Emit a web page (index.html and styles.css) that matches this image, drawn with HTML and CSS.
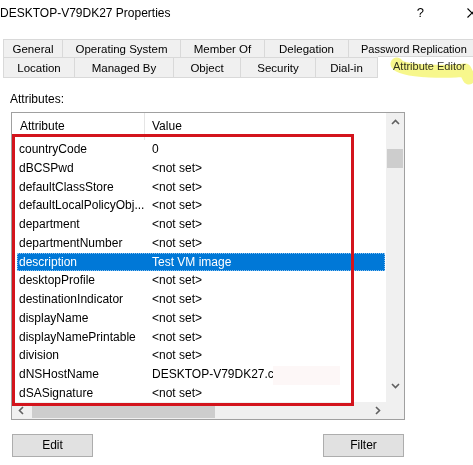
FILE: index.html
```html
<!DOCTYPE html>
<html>
<head>
<meta charset="utf-8">
<link rel="stylesheet" href="styles.css">
</head>
<body>
<div class="titlebar">
  <span class="title">DESKTOP-V79DK27 Properties</span>
  <span class="help">?</span>
  <svg class="close" width="10" height="10" viewBox="0 0 10 10"><path d="M0.5 0.5 L9.5 9.5 M9.5 0.5 L0.5 9.5" stroke="#000" stroke-width="1.1" fill="none"/></svg>
</div>

<div class="tabs">
  <div class="tabrow row1">
    <div class="tab w60">General</div>
    <div class="tab w118">Operating System</div>
    <div class="tab w84">Member Of</div>
    <div class="tab w84">Delegation</div>
    <div class="tab last">Password Replication</div>
  </div>
  <div class="tabrow row2">
    <div class="tab w72">Location</div>
    <div class="tab w99">Managed By</div>
    <div class="tab w67">Object</div>
    <div class="tab w75">Security</div>
    <div class="tab w62">Dial-in</div>
    <div class="tab selected">Attribute Editor</div>
  </div>
</div>

<div class="panel">
  <div class="label">Attributes:</div>
  <div class="listbox">
    <div class="lv">
      <div class="lv-header">
        <div class="hcell first">Attribute</div>
        <div class="hcell">Value</div>
      </div>
      <div class="lv-row"><span class="c1">countryCode</span><span class="c2">0</span></div>
      <div class="lv-row"><span class="c1">dBCSPwd</span><span class="c2">&lt;not set&gt;</span></div>
      <div class="lv-row"><span class="c1">defaultClassStore</span><span class="c2">&lt;not set&gt;</span></div>
      <div class="lv-row"><span class="c1">defaultLocalPolicyObj...</span><span class="c2">&lt;not set&gt;</span></div>
      <div class="lv-row"><span class="c1">department</span><span class="c2">&lt;not set&gt;</span></div>
      <div class="lv-row"><span class="c1">departmentNumber</span><span class="c2">&lt;not set&gt;</span></div>
      <div class="lv-row sel"><span class="c1">description</span><span class="c2">Test VM image</span></div>
      <div class="lv-row"><span class="c1">desktopProfile</span><span class="c2">&lt;not set&gt;</span></div>
      <div class="lv-row"><span class="c1">destinationIndicator</span><span class="c2">&lt;not set&gt;</span></div>
      <div class="lv-row"><span class="c1">displayName</span><span class="c2">&lt;not set&gt;</span></div>
      <div class="lv-row"><span class="c1">displayNamePrintable</span><span class="c2">&lt;not set&gt;</span></div>
      <div class="lv-row"><span class="c1">division</span><span class="c2">&lt;not set&gt;</span></div>
      <div class="lv-row"><span class="c1">dNSHostName</span><span class="c2">DESKTOP-V79DK27.co</span></div>
      <div class="lv-row"><span class="c1">dSASignature</span><span class="c2">&lt;not set&gt;</span></div>
    </div>
    <div class="vscroll">
      <div class="sbtn"><svg width="9" height="6" viewBox="0 0 9 6"><path d="M1 5 L4.5 1.5 L8 5" stroke="#606060" stroke-width="1.6" fill="none"/></svg></div>
      <div class="vgap"></div>
      <div class="vthumb"></div>
      <div class="vfill"></div>
      <div class="sbtn down"><svg width="9" height="6" viewBox="0 0 9 6"><path d="M1 1 L4.5 4.5 L8 1" stroke="#606060" stroke-width="1.6" fill="none"/></svg></div>
    </div>
    <div class="hscroll">
      <div class="hbtn"><svg width="6" height="9" viewBox="0 0 6 9"><path d="M5 1 L1.5 4.5 L5 8" stroke="#606060" stroke-width="1.6" fill="none"/></svg></div>
      <div class="hthumb"></div>
      <div class="hfill"></div>
      <div class="hbtn"><svg width="6" height="9" viewBox="0 0 6 9"><path d="M1 1 L4.5 4.5 L1 8" stroke="#606060" stroke-width="1.6" fill="none"/></svg></div>
    </div>
    <div class="corner"></div>
  </div>
  <div class="buttons">
    <div class="btn">Edit</div>
    <div class="btn">Filter</div>
  </div>
</div>

<div class="redact"></div>
<div class="annot-red"></div>
<svg class="annot-yellow" width="90" height="34" viewBox="0 0 90 34">
  <path d="M8 10 Q 12 16 40 17 Q 64 18 76 16 L 80 24" stroke="#f4f466" stroke-width="13" stroke-linecap="round" stroke-linejoin="round" fill="none" opacity="0.75"/>
</svg>
</body>
</html>
```

FILE: styles.css
```css
* { box-sizing: border-box; }

html, body {
  margin: 0;
  padding: 0;
}

body {
  width: 473px;
  height: 465px;
  overflow: hidden;
  background: #ffffff;
  font-family: "Liberation Sans", Arial, sans-serif;
  font-size: 12px;
  color: #000;
}

.titlebar {
  height: 25px;
  display: flex;
  align-items: center;
}

.title {
  margin-left: 0;
  font-size: 12px;
}

.help {
  margin-left: auto;
  font-size: 13px;
}

.close {
  margin-left: 43px;
  margin-right: -4px;
}

.tabs {
  margin-top: 14px;
  height: 39px;
  font-size: 11.5px;
}

.tabrow {
  display: flex;
  padding-left: 3px;
  white-space: nowrap;
}

.row1 { height: 19px; }
.row2 { height: 20px; }

.tab {
  flex: none;
  background: #f0f0f0;
  border: 1px solid #d9d9d9;
  border-left: none;
  text-align: center;
  line-height: 18px;
}

.tab:first-child { border-left: 1px solid #d9d9d9; }
.row2 .tab { border-top: none; line-height: 20px; }

.w60 { width: 60px; }
.w118 { width: 118px; }
.w84 { width: 84px; }
.w72 { width: 72px; }
.w99 { width: 99px; }
.w67 { width: 67px; }
.w75 { width: 75px; }
.w62 { width: 62px; }

.tab.last {
  width: 130px;
  text-align: left;
  padding-left: 12px;
  font-size: 11px;
}

.row2 .tab.selected {
  width: 100px;
  background: #ffffff;
  margin-top: -2px;
  height: 23px;
  border: 1px solid #d9d9d9;
  border-bottom: none;
  border-left: none;
  line-height: 18px;
  text-align: left;
  padding-left: 15px;
  font-size: 11px;
  color: #333;
}

.panel {
  padding: 14px 0 0 0;
}

.label {
  margin-left: 10px;
  line-height: 14px;
  height: 14px;
}

.listbox {
  margin-top: 6px;
  margin-left: 11px;
  width: 394px;
  height: 308px;
  border: 1px solid #a0a0a0;
  display: grid;
  grid-template-columns: 1fr 18px;
  grid-template-rows: 1fr 17px;
}

.lv {
  overflow: hidden;
  background: #fff;
}

.lv-header {
  height: 27px;
  display: grid;
  grid-template-columns: 133px 1fr;
}

.hcell {
  line-height: 27px;
  padding-left: 7px;
}

.hcell.first {
  padding-left: 8px;
  border-right: 1px solid #e5e5e5;
}

.lv-row {
  margin-left: 5px;
  height: 18.77px;
  line-height: 18.77px;
  display: grid;
  grid-template-columns: 128px 1fr;
  white-space: nowrap;
}

.lv-row .c1 { padding-left: 2px; overflow: hidden; }
.lv-row .c2 { padding-left: 7px; }

.lv-row.sel {
  background: #0078d7;
  color: #fff;
  margin-right: 1px;
  outline: 1px dotted #8cc2f0;
  outline-offset: -1px;
}

.vscroll {
  background: #f0f0f0;
  display: flex;
  flex-direction: column;
}

.sbtn {
  height: 17px;
  display: flex;
  align-items: center;
  justify-content: center;
}

.sbtn.down { height: 22px; align-items: flex-start; padding-top: 3px; }

.vgap { height: 19px; }

.vthumb {
  height: 19px;
  margin: 0 1px;
  background: #cdcdcd;
}

.vfill { flex: 1; }

.hscroll {
  background: #f0f0f0;
  display: flex;
  align-items: stretch;
}

.hbtn {
  width: 17px;
  display: flex;
  align-items: center;
  justify-content: center;
}

.hthumb {
  width: 183px;
  margin: 1px 0 1px 3px;
  background: #cdcdcd;
}

.hfill { flex: 1; }

.corner { background: #f0f0f0; }

.buttons {
  margin-top: 14px;
  padding: 0 69px 0 12px;
  display: flex;
  justify-content: space-between;
}

.btn {
  width: 81px;
  height: 23px;
  background: #e1e1e1;
  border: 1px solid #adadad;
  text-align: center;
  line-height: 21px;
}

.redact {
  position: absolute;
  left: 273px;
  top: 366px;
  width: 67px;
  height: 19px;
  background: #fdf7f7;
}

.annot-red {
  position: absolute;
  left: 12px;
  top: 134px;
  width: 342px;
  height: 272px;
  border: 3px solid #d3141c;
}

.annot-yellow {
  position: absolute;
  left: 389px;
  top: 54px;
  mix-blend-mode: multiply;
}
```
